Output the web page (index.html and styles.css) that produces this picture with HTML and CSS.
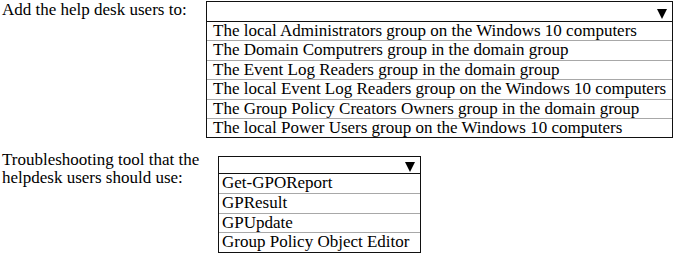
FILE: index.html
```html
<!DOCTYPE html>
<html lang="en">

<head>
    <meta charset="UTF-8">
    <meta name="viewport" content="width=device-width, initial-scale=1.0">
    <title>Help Desk Answer Area</title>
    <link rel="stylesheet" href="styles.css">
</head>

<body>
    <div class="question question-groups">
        <div class="question-label">Add the help desk users to:</div>
        <div class="dropdown dropdown-wide">
            <div class="dropdown-header"><span class="arrow"></span></div>
            <ul class="dropdown-options">
                <li>The local Administrators group on the Windows 10 computers</li>
                <li>The Domain Computrers group in the domain group</li>
                <li>The Event Log Readers group in the domain group</li>
                <li>The local Event Log Readers group on the Windows 10 computers</li>
                <li>The Group Policy Creators Owners group in the domain group</li>
                <li>The local Power Users group on the Windows 10 computers</li>
            </ul>
        </div>
    </div>

    <div class="question question-tool">
        <div class="question-label label-narrow">Troubleshooting tool that the helpdesk users should use:</div>
        <div class="dropdown dropdown-narrow">
            <div class="dropdown-header"><span class="arrow"></span></div>
            <ul class="dropdown-options">
                <li>Get-GPOReport</li>
                <li>GPResult</li>
                <li>GPUpdate</li>
                <li>Group Policy Object Editor</li>
            </ul>
        </div>
    </div>
</body>

</html>
```

FILE: styles.css
```css
:root {
    --text-color: #000;
    --border-dark: #111;
    --border-light: #a8a8a8;
}

* {
    margin: 0;
    padding: 0;
    box-sizing: border-box;
    font-family: 'Liberation Serif', 'Times New Roman', serif;
}

body {
    background: #fff;
    color: var(--text-color);
    font-size: 17px;
    padding-left: 2px;
}

.question {
    display: flex;
    align-items: flex-start;
}

.question-groups {
    padding-top: 1px;
}

.question-tool {
    margin-top: 13px;
}

.question-label {
    width: 204px;
    line-height: 18px;
}

.label-narrow {
    width: 216px;
    padding-right: 14px;
}

.dropdown {
    border: 1px solid var(--border-dark);
}

.dropdown-wide {
    width: 467px;
}

.dropdown-narrow {
    width: 203px;
    margin-top: 5px;
}

.dropdown-header {
    display: flex;
    justify-content: flex-end;
    align-items: flex-end;
    border-bottom: 1px solid var(--border-dark);
    padding: 0 5px 2px 0;
}

.dropdown-wide .dropdown-header {
    height: 20px;
}

.dropdown-narrow .dropdown-header {
    height: 17px;
    padding-bottom: 1px;
}

.arrow {
    width: 0;
    height: 0;
    border-left: 5px solid transparent;
    border-right: 5px solid transparent;
    border-top: 10px solid #000;
}

.dropdown-options {
    list-style: none;
}

.dropdown-options li {
    border-bottom: 1px solid var(--border-light);
    line-height: 18.4px;
    white-space: nowrap;
}

.dropdown-options li:last-child {
    border-bottom: none;
}

.dropdown-wide li {
    padding-left: 6px;
}

.dropdown-narrow li {
    padding-left: 3px;
    line-height: 18.6px;
}
```
